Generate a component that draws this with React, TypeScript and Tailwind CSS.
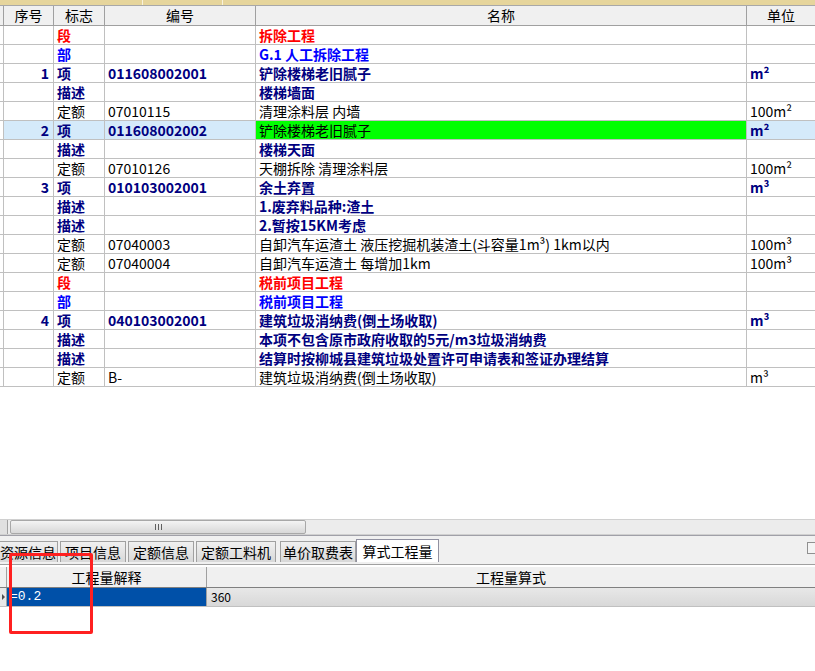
import React from 'react'

type Kind = 'seg' | 'part' | 'item' | 'desc' | 'quota'

type Row = {
  no?: string
  kind: Kind
  code?: string
  name: string
  unit?: string
  selected?: boolean
}

const rows: Row[] = [
  { kind: 'seg', name: '拆除工程' },
  { kind: 'part', name: 'G.1 人工拆除工程' },
  { no: '1', kind: 'item', code: '011608002001', name: '铲除楼梯老旧腻子', unit: 'm²' },
  { kind: 'desc', name: '楼梯墙面' },
  { kind: 'quota', code: '07010115', name: '清理涂料层 内墙', unit: '100m²' },
  { no: '2', kind: 'item', code: '011608002002', name: '铲除楼梯老旧腻子', unit: 'm²', selected: true },
  { kind: 'desc', name: '楼梯天面' },
  { kind: 'quota', code: '07010126', name: '天棚拆除 清理涂料层', unit: '100m²' },
  { no: '3', kind: 'item', code: '010103002001', name: '余土弃置', unit: 'm³' },
  { kind: 'desc', name: '1.废弃料品种:渣土' },
  { kind: 'desc', name: '2.暂按15KM考虑' },
  { kind: 'quota', code: '07040003', name: '自卸汽车运渣土 液压挖掘机装渣土(斗容量1m³) 1km以内', unit: '100m³' },
  { kind: 'quota', code: '07040004', name: '自卸汽车运渣土 每增加1km', unit: '100m³' },
  { kind: 'seg', name: '税前项目工程' },
  { kind: 'part', name: '税前项目工程' },
  { no: '4', kind: 'item', code: '040103002001', name: '建筑垃圾消纳费(倒土场收取)', unit: 'm³' },
  { kind: 'desc', name: '本项不包含原市政府收取的5元/m3垃圾消纳费' },
  { kind: 'desc', name: '结算时按柳城县建筑垃圾处置许可申请表和签证办理结算' },
  { kind: 'quota', code: 'B-', name: '建筑垃圾消纳费(倒土场收取)', unit: 'm³' },
]

const flagText: Record<Kind, string> = {
  seg: '段',
  part: '部',
  item: '项',
  desc: '描述',
  quota: '定额',
}

const tone: Record<Kind, string> = {
  seg: 'font-bold text-[#ff0000]',
  part: 'font-bold text-[#0000ff]',
  item: 'font-bold text-[#000080]',
  desc: 'font-bold text-[#000080]',
  quota: 'text-black',
}

const cell = 'h-[18px] shrink-0 border-r border-[#c0c0c0] overflow-hidden whitespace-nowrap leading-[18px]'

function GridRow({ row }: { row: Row }) {
  const t = tone[row.kind]
  const bg = row.selected ? 'bg-[#d5eafa]' : 'bg-white'
  return (
    <div className={`flex h-[19px] border-b border-[#c0c0c0] ${bg}`}>
      <div className={`${cell} w-[4px] bg-white`} />
      <div className={`${cell} w-[50px] pr-[4px] text-right font-bold text-[#000080]`}>{row.no}</div>
      <div className={`${cell} w-[51px] pl-[3px] ${t}`}>{flagText[row.kind]}</div>
      <div className={`${cell} w-[151px] pl-[3px] ${t}`}>{row.code}</div>
      <div
        className={`${cell} w-[491px] pl-[3px] ${
          row.selected ? 'bg-[#00ff00] font-normal text-black' : t
        }`}
      >
        {row.name}
      </div>
      <div className={`${cell} flex-1 border-r-0 pl-[3px] ${row.kind === 'item' ? 'font-bold text-[#000080]' : 'text-black'}`}>
        {row.unit}
      </div>
    </div>
  )
}

function HeaderCell({ w, children }: { w: string; children?: React.ReactNode }) {
  return (
    <div className={`h-[19px] shrink-0 border-r border-[#a0a0a0] text-center leading-[19px] ${w}`}>{children}</div>
  )
}

// inactive tabs, left one is cut by the panel edge
const tabs = [
  { label: '资源信息', cls: 'w-[58px] justify-end border-l-0 pr-[1px]' },
  { label: '项目信息', cls: 'ml-[2px] w-[66px] justify-center' },
  { label: '定额信息', cls: 'ml-[2px] w-[66px] justify-center' },
  { label: '定额工料机', cls: 'ml-[2px] w-[80px] justify-center' },
  { label: '单价取费表', cls: 'ml-[4px] w-[76px] justify-center' },
]

export default function App() {
  return (
    <div
      className="relative flex h-[671px] w-[815px] flex-col overflow-hidden bg-white text-[14px] text-black"
      style={{ fontFamily: '"Noto Sans CJK SC", "Liberation Sans", sans-serif' }}
    >
      {/* title strip */}
      <div className="flex h-[5px] bg-[#e6d59c]">
        <div className="w-[142px]" />
        <div className="w-px bg-[#f8f2dc]" />
        <div className="w-[79px]" />
        <div className="w-px bg-[#f8f2dc]" />
      </div>
      <div className="h-px bg-[#a8a8a8]" />

      {/* main grid header */}
      <div className="flex border-b border-[#a0a0a0] bg-[#f0f0f0]">
        <HeaderCell w="w-[4px]" />
        <HeaderCell w="w-[50px]">序号</HeaderCell>
        <HeaderCell w="w-[51px]">标志</HeaderCell>
        <HeaderCell w="w-[151px]">编号</HeaderCell>
        <HeaderCell w="w-[491px]">名称</HeaderCell>
        <div className="h-[19px] flex-1 text-center leading-[19px]">单位</div>
      </div>

      {rows.map((r, i) => (
        <GridRow key={i} row={r} />
      ))}

      <div className="flex-1" />

      {/* horizontal scrollbar */}
      <div className="flex h-[16px] items-center border-y border-[#d0d0d0] bg-[#ececec]">
        <div className="h-[14px] w-[8px] border-r border-[#a0a0a0] bg-[#e0e0e0]" />
        <div className="ml-[2px] flex h-[14px] w-[296px] items-center justify-center rounded-[2px] border border-[#a8a8a8] bg-gradient-to-b from-[#f4f4f4] to-[#d8d8d8]">
          <div className="flex gap-[2px]">
            <div className="h-[6px] w-px bg-[#606060]" />
            <div className="h-[6px] w-px bg-[#606060]" />
            <div className="h-[6px] w-px bg-[#606060]" />
          </div>
        </div>
      </div>

      {/* tab strip */}
      <div className="relative flex h-[29px] items-end border-t border-[#a0a0a8] bg-[#f0f0f0] pb-[2px]">
        <div className="flex items-end">
          {tabs.map((t) => (
            <div
              key={t.label}
              className={`flex h-[21px] shrink-0 items-center overflow-hidden whitespace-nowrap border border-b-0 border-[#a0a0a0] bg-gradient-to-b from-[#f0f0f0] to-[#d8d8d8] leading-[20px] ${t.cls}`}
            >
              {t.label}
            </div>
          ))}
          <div className="flex h-[23px] w-[83px] shrink-0 items-center justify-center border border-b-0 border-[#9090a0] bg-white leading-[22px]">
            算式工程量
          </div>
        </div>
        <div className="absolute right-[0px] top-[6px] h-[12px] w-[8px] border border-r-0 border-[#909090] bg-[#f4f4f4]" />
      </div>
      <div className="h-[3px] border-t border-[#a0a0a0] bg-white" />

      {/* lower grid */}
      <div className="flex h-[21px] border-b border-[#808080] bg-[#f0f0f0]">
        <div className="w-[7px] border-r border-[#a0a0a0]" />
        <div className="w-[200px] border-r border-[#a0a0a0] text-center leading-[20px]">工程量解释</div>
        <div className="flex-1 text-center leading-[20px]">工程量算式</div>
      </div>
      <div className="flex h-[19px] border-b border-[#c0c0c0]">
        <div className="flex w-[7px] items-center justify-center border-r border-[#a0a0a0] bg-[#e8e8e8]">
          <div className="h-0 w-0 border-y-[3px] border-l-[3px] border-y-transparent border-l-[#505050]" />
        </div>
        <div
          className="w-[200px] border-r border-[#a0a0a0] bg-[#0050a8] pl-[3px] text-[13px] leading-[18px] text-white"
          style={{ fontFamily: '"Liberation Mono", monospace' }}
        >
          =0.2
        </div>
        <div className="flex-1 bg-gradient-to-b from-[#e8e8e8] to-[#d8d8d8] pl-[4px] text-[12px] leading-[18px]">360</div>
      </div>
      <div className="h-[64px]" />

      {/* red annotation box */}
      <div className="absolute left-[9px] top-[553px] h-[81px] w-[84px] rounded-[2px] border-[3px] border-[#ff2020]" />
    </div>
  )
}
